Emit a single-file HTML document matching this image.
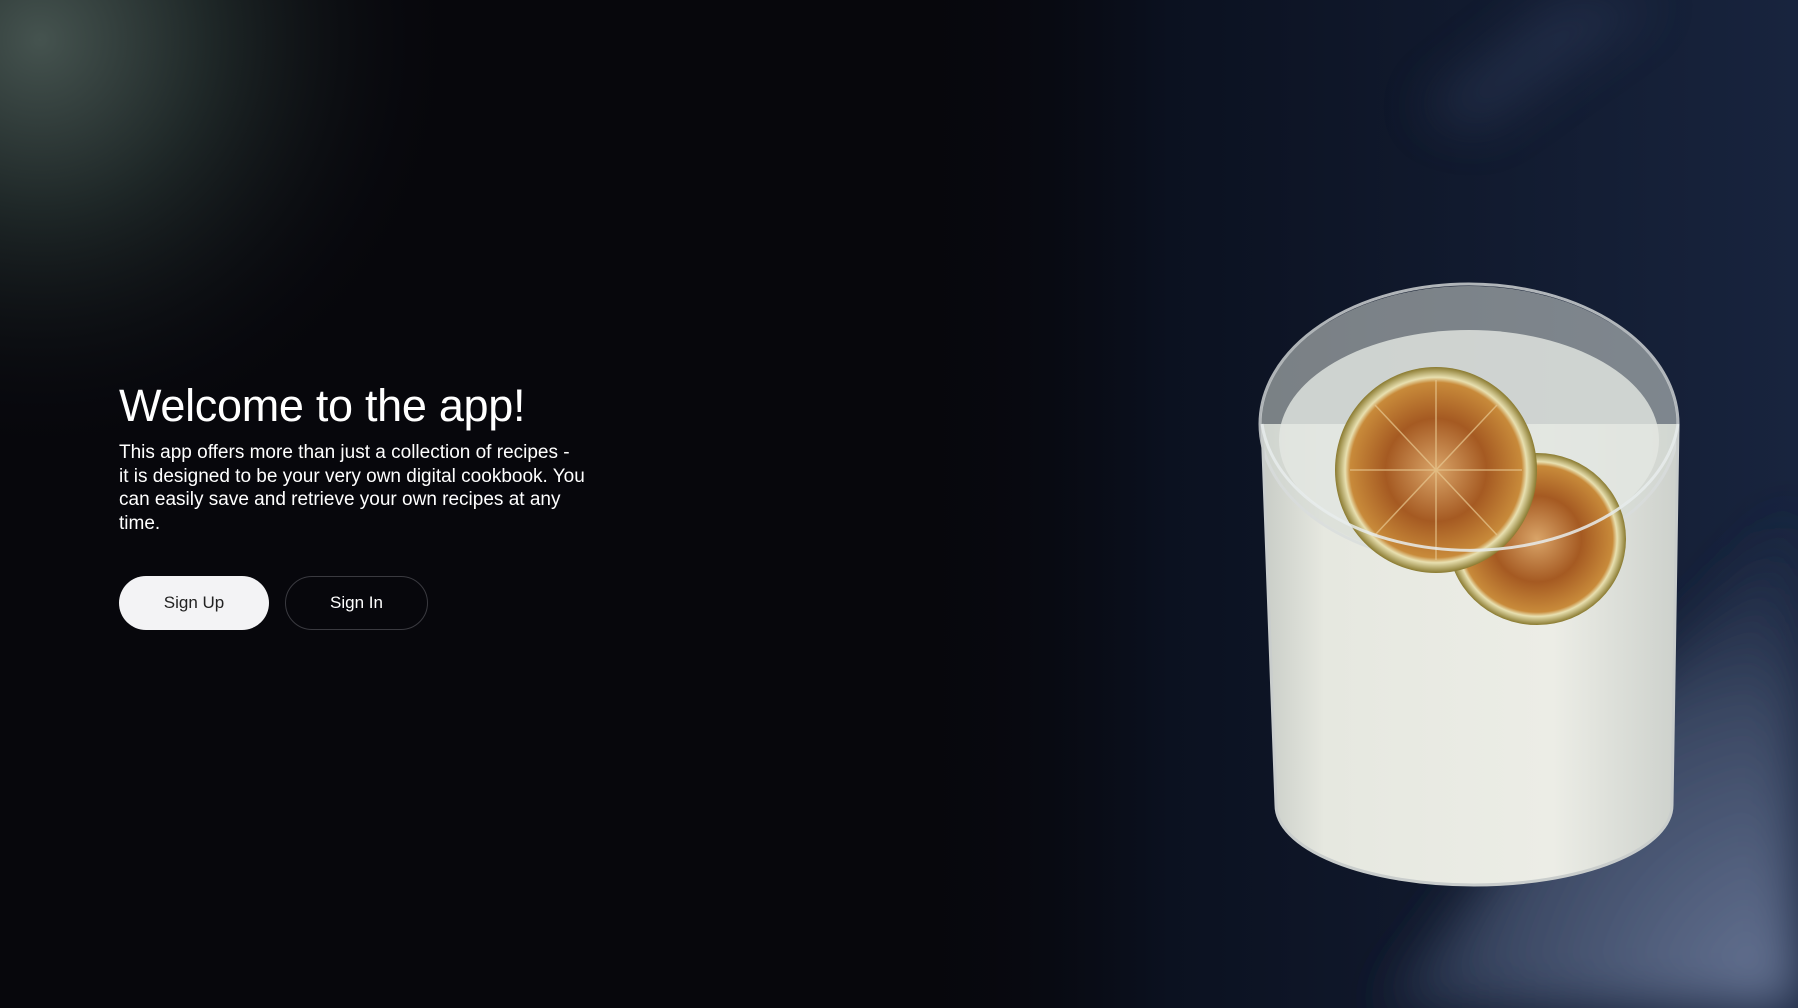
<!DOCTYPE html>
<html><head><meta charset="utf-8"><style>
html,body{margin:0;padding:0;width:1798px;height:1008px;overflow:hidden;background:#07070c;font-family:"Liberation Sans",sans-serif}
.bg{position:absolute;left:0;top:0;width:1798px;height:1008px;overflow:hidden;display:block}
h1{position:absolute;left:119px;top:380px;margin:0;font-size:45px;font-weight:400;color:#fff;letter-spacing:-0.3px}
p{position:absolute;left:119px;top:441px;margin:0;width:484px;font-size:19px;line-height:23.5px;color:#fff;letter-spacing:0px}
.b{position:absolute;top:576px;height:54px;border-radius:27px;box-sizing:border-box;font-size:17px;display:flex;align-items:center;justify-content:center}
.up{left:119px;width:150px;background:#f3f3f5;color:#222}
.in{left:285px;width:143px;border:1px solid #3a3a40;color:#fff}
</style></head><body>
<svg class="bg" width="1798" height="1008" viewBox="0 0 1798 1008">
<defs>
<radialGradient id="gl" cx="40" cy="40" r="420" gradientUnits="userSpaceOnUse">
<stop offset="0" stop-color="#45534f"/><stop offset="0.4" stop-color="#1f2828"/><stop offset="1" stop-color="#07070c" stop-opacity="0"/></radialGradient>
<linearGradient id="rt" x1="900" y1="0" x2="1798" y2="0" gradientUnits="userSpaceOnUse">
<stop offset="0" stop-color="#07070c" stop-opacity="0"/><stop offset="0.3" stop-color="#0b1120"/><stop offset="1" stop-color="#18243e"/></linearGradient>
<radialGradient id="br" cx="1798" cy="1008" r="560" gradientUnits="userSpaceOnUse">
<stop offset="0" stop-color="#6a7898"/><stop offset="0.55" stop-color="#3a4762"/><stop offset="1" stop-color="#18243e" stop-opacity="0"/></radialGradient>
<linearGradient id="liq" x1="0" y1="0" x2="1" y2="0">
<stop offset="0" stop-color="#c8ccc6"/><stop offset="0.15" stop-color="#e6e8e0"/><stop offset="0.7" stop-color="#ecede6"/><stop offset="1" stop-color="#cdd1cc"/></linearGradient>
<radialGradient id="or" cx="0.5" cy="0.5" r="0.5">
<stop offset="0" stop-color="#d9a468"/><stop offset="0.5" stop-color="#a55a22"/><stop offset="0.85" stop-color="#c88a3a"/><stop offset="0.9" stop-color="#e8e0b0"/><stop offset="1" stop-color="#8a7a30"/></radialGradient>
<filter id="bl" x="-50%" y="-50%" width="200%" height="200%"><feGaussianBlur stdDeviation="25"/></filter>
</defs>
<rect width="1798" height="1008" fill="#07070c"/>
<rect width="1798" height="1008" fill="url(#rt)"/>
<rect width="1798" height="1008" fill="url(#gl)"/>
<polygon points="1380,1008 1798,500 1798,1008" fill="url(#br)" filter="url(#bl)"/>
<polygon points="1420,110 1560,0 1660,0 1480,130" fill="#33415e" opacity="0.45" filter="url(#bl)"/>
<path d="M1262,424 L1276,805 A198,80 0 0 0 1672,805 L1678,424 Z" fill="url(#liq)"/>
<ellipse cx="1469" cy="424" rx="208" ry="138" fill="#d5dad6" opacity="0.55"/>
<ellipse cx="1469" cy="440" rx="190" ry="110" fill="#e4e7e2" opacity="0.8"/>
<ellipse cx="1469" cy="424" rx="209" ry="140" fill="none" stroke="#d8dcdc" stroke-width="3" opacity="0.8"/>
<path d="M1262,424 L1276,805 A198,80 0 0 0 1672,805 L1678,424" fill="none" stroke="#c9cdcc" stroke-width="3"/>
<ellipse cx="1537" cy="539" rx="89" ry="86" fill="url(#or)"/>
<ellipse cx="1436" cy="470" rx="101" ry="103" fill="url(#or)"/>
<g stroke="#e8c890" stroke-width="1.5" opacity="0.7">
<line x1="1436" y1="380" x2="1436" y2="560"/><line x1="1350" y1="470" x2="1522" y2="470"/>
<line x1="1375" y1="405" x2="1497" y2="535"/><line x1="1375" y1="535" x2="1497" y2="405"/></g>
<path d="M1262,424 A209,140 0 0 0 1678,424" fill="none" stroke="#e8ecec" stroke-width="3" opacity="0.85"/>
</svg>
<h1>Welcome to the app!</h1>
<p>This app offers more than just a collection of recipes -<br>it is designed to be your very own digital cookbook. You can easily save and retrieve your own recipes at any time.</p>
<div class="b up">Sign Up</div>
<div class="b in">Sign In</div>
</body></html>
